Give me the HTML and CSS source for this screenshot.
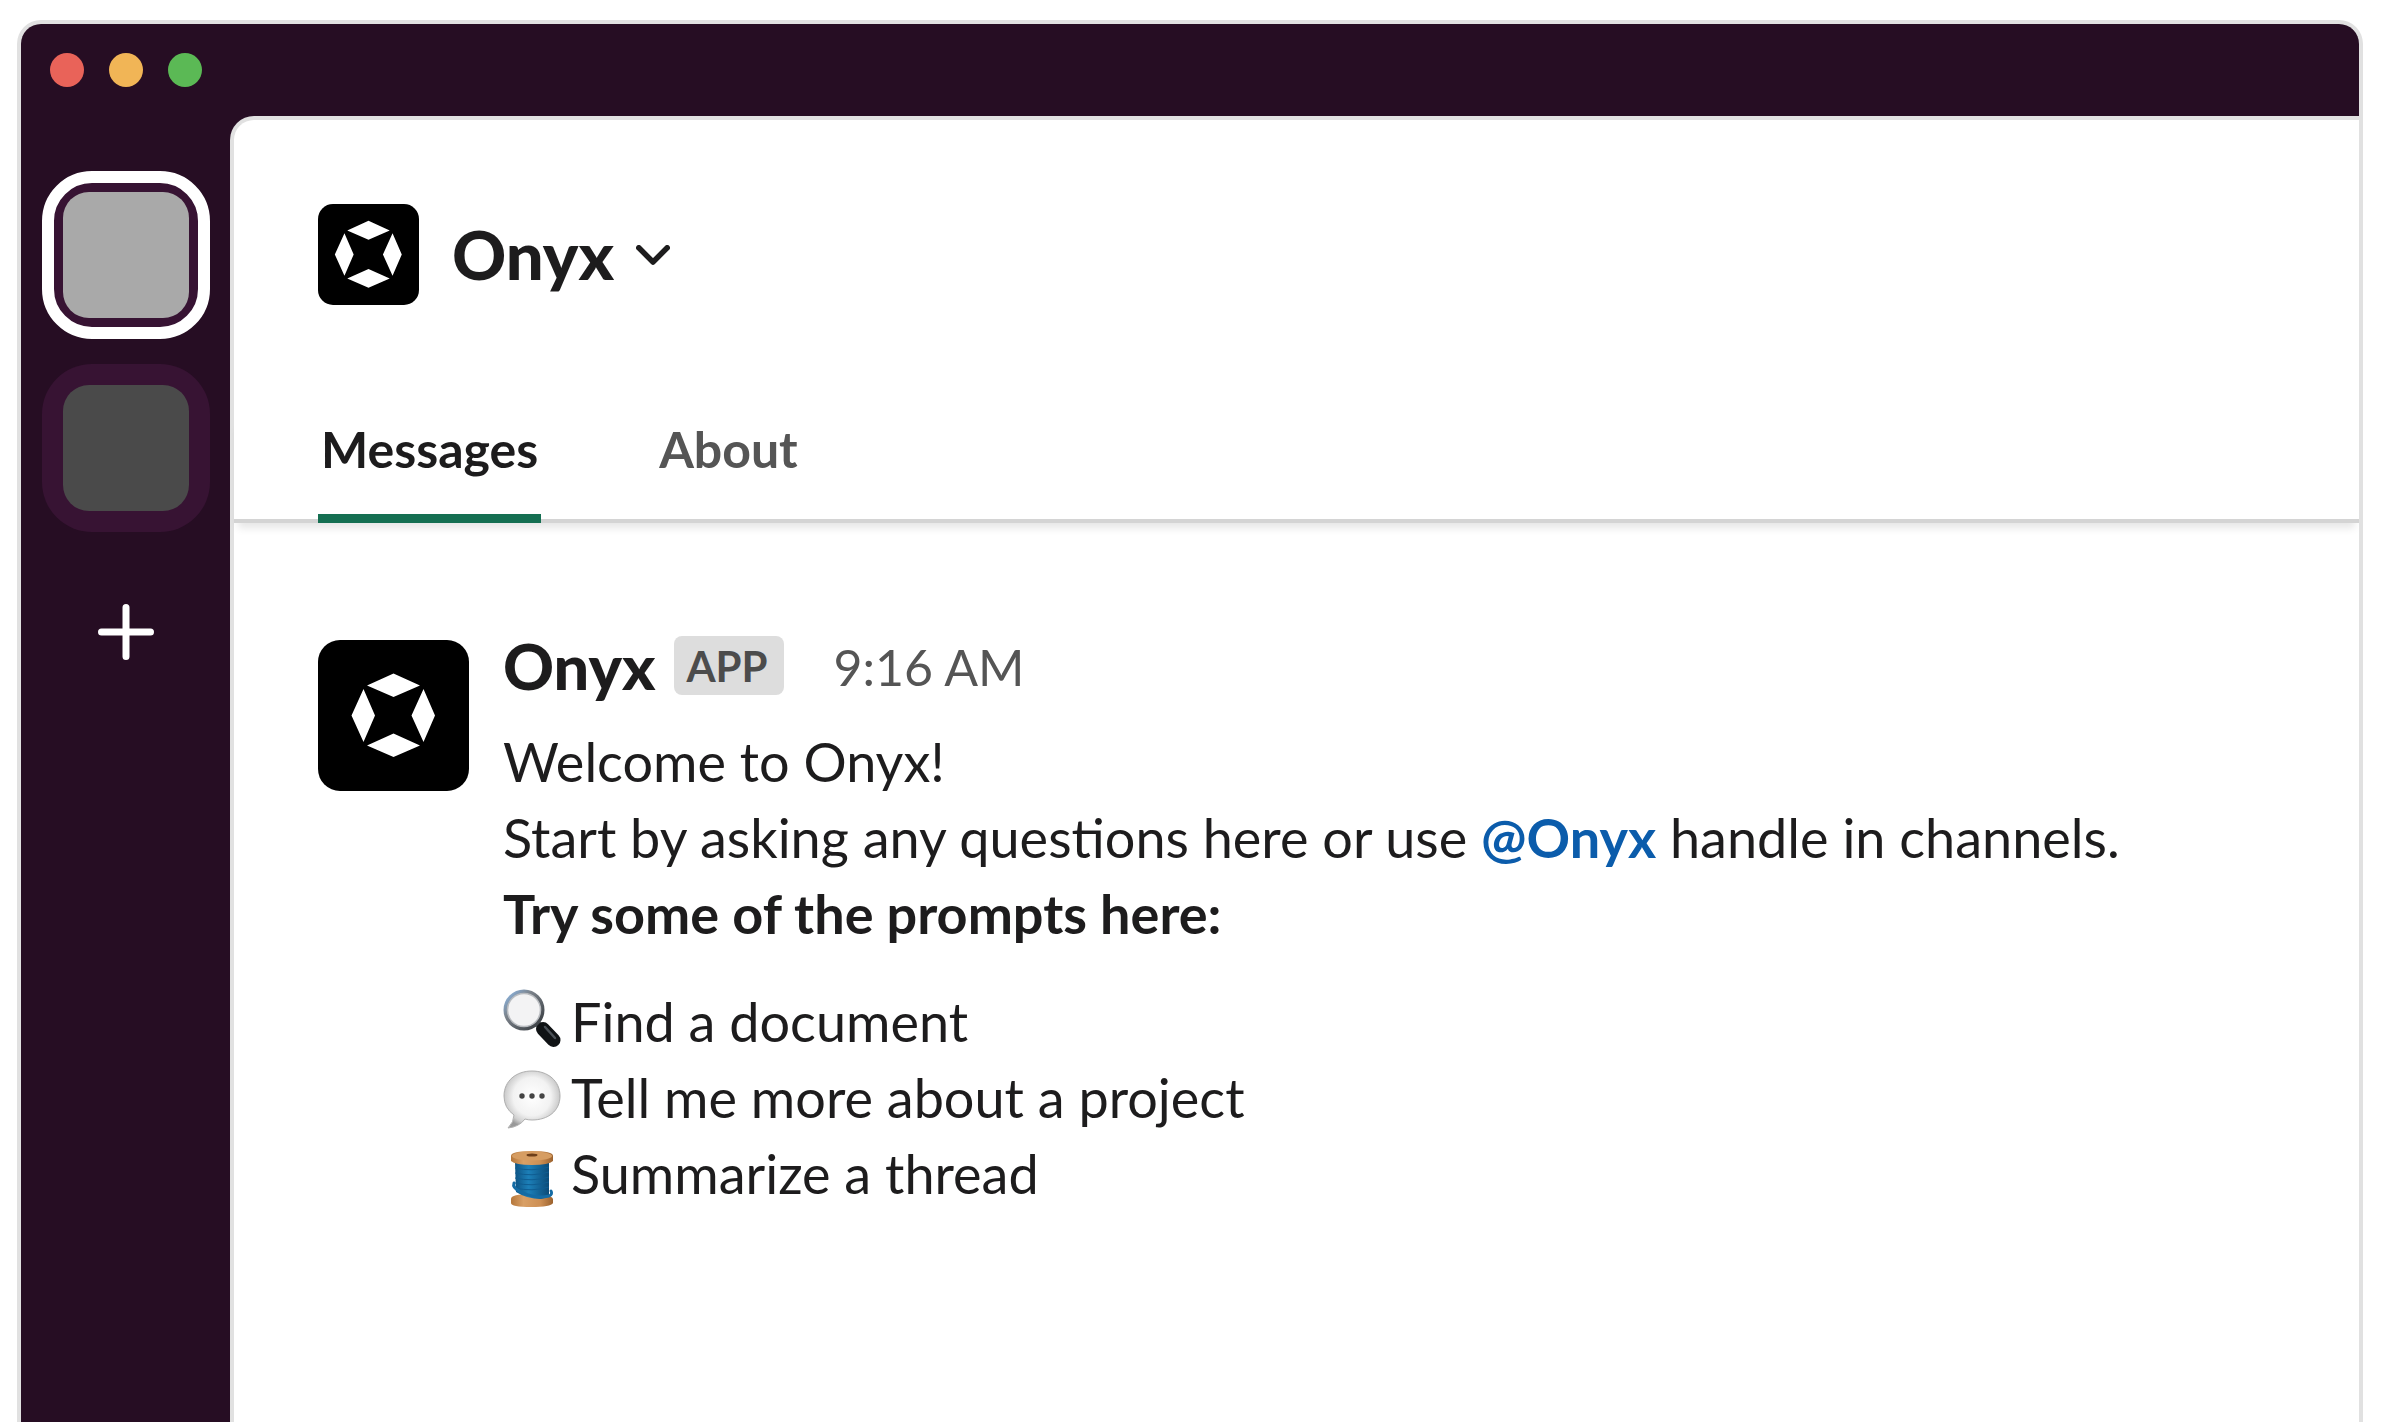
FILE: index.html
```html
<!DOCTYPE html>
<html lang="en">
<head>
<meta charset="utf-8">
<title>Onyx</title>
<link rel="stylesheet" href="styles.css">
</head>
<body>
<div class="window">
  <header class="titlebar">
    <button class="dot dot-close" aria-label="Close"></button>
    <button class="dot dot-minimize" aria-label="Minimize"></button>
    <button class="dot dot-zoom" aria-label="Zoom"></button>
  </header>
  <div class="body">
    <nav class="rail" aria-label="Workspaces">
      <button class="workspace workspace-active" aria-label="Current workspace"><span class="swatch swatch-light"></span></button>
      <button class="workspace" aria-label="Other workspace"><span class="swatch swatch-dark"></span></button>
      <button class="add" aria-label="Add a workspace">
        <svg viewBox="0 0 56 56" width="56" height="56" fill="none" stroke="#fff" stroke-width="7" stroke-linecap="round"><path d="M28 3.5v49M3.5 28h49"/></svg>
      </button>
    </nav>
    <main class="main">
      <button class="channel">
        <svg class="logo-small" viewBox="12.5 12.5 126 126"><use href="#onyx"/></svg>
        <span class="channel-name">Onyx</span>
        <svg class="chevron" viewBox="0 0 34 20" fill="none" stroke="#1d1c1d" stroke-width="5.500" stroke-linecap="round" stroke-linejoin="round"><path d="M2.800 2.800L17 17L31.200 2.800"/></svg>
      </button>
      <nav class="tabs">
        <a class="tab tab-active" href="#messages">Messages</a>
        <a class="tab" href="#about">About</a>
      </nav>
      <article class="message" id="messages">
        <svg class="avatar" viewBox="0 0 151 151">
          <g id="onyx">
            <path fill="#fff" d="M75.500 33.500L102 45.500L75.500 57L49 45.500ZM75.500 93.500L102 105.500L75.500 117L49 105.500ZM33.500 75.500L45.500 49L57 75.500L45.500 102ZM93.500 75.500L105.500 49L117 75.500L105.500 102Z"/>
          </g>
        </svg>
        <div class="content">
          <div class="meta">
            <span class="author">Onyx</span>
            <span class="badge">APP</span>
            <time class="time">9:16 AM</time>
          </div>
          <p>Welcome to Onyx!</p>
          <p>Start by asking any questions here or use <a class="mention" href="#about">@Onyx</a> handle in channels.</p>
          <p class="strong">Try some of the prompts here:</p>
          <ul class="prompts">
            <li>
              <svg class="emoji" viewBox="0 4 58 58">
                <defs>
                  <linearGradient id="rim" x1="0" y1="0" x2="1" y2="1"><stop offset="0" stop-color="#8db9e8"/><stop offset=".35" stop-color="#7b828a"/><stop offset="1" stop-color="#34383c"/></linearGradient>
                </defs>
                <path d="M34 34l5 5" stroke="#777c80" stroke-width="7"/>
                <path d="M40 40l10.500 11" stroke="#101315" stroke-width="14" stroke-linecap="round"/>
                <path d="M42 38l10 11" stroke="#4a5056" stroke-width="2.500" stroke-linecap="round"/>
                <circle cx="21" cy="21" r="18.500" fill="#f3f3f4" stroke="url(#rim)" stroke-width="4"/>
                <circle cx="21" cy="21" r="16.500" fill="none" stroke="#b9bcc0" stroke-width="1.500"/>
              </svg>
              <a href="#find">Find a document</a>
            </li>
            <li>
              <svg class="emoji" viewBox="0 -1 58 58">
                <defs>
                  <radialGradient id="bubble" cx=".5" cy=".45" r=".56"><stop offset="0" stop-color="#fff"/><stop offset=".6" stop-color="#f2f2f2"/><stop offset=".85" stop-color="#cfcfcf"/><stop offset="1" stop-color="#999"/></radialGradient>
                </defs>
                <path fill="url(#bubble)" stroke="#b0b0b0" stroke-width="1" d="M29 1C45 1 57 11 57 26S45 50 29 50Q25 50 22 49Q16 57 5 58Q11 52 11 45Q1 38 1 26C1 11 13 1 29 1Z"/>
                <g fill="#444"><circle cx="19" cy="26" r="2.700"/><circle cx="29" cy="26" r="2.700"/><circle cx="39" cy="26" r="2.700"/></g>
              </svg>
              <a href="#tell">Tell me more about a project</a>
            </li>
            <li>
              <svg class="emoji" viewBox="0 -4 58 58">
                <defs>
                  <linearGradient id="wood"><stop offset="0" stop-color="#b5773b"/><stop offset=".3" stop-color="#d9a066"/><stop offset=".7" stop-color="#cd8f54"/><stop offset="1" stop-color="#9c622e"/></linearGradient>
                  <linearGradient id="thread"><stop offset="0" stop-color="#0e5484"/><stop offset=".4" stop-color="#1c7fb8"/><stop offset="1" stop-color="#0b4b78"/></linearGradient>
                </defs>
                <path fill="url(#wood)" d="M8 50Q8 45 28 45T50 50V54Q48 58 28 58T8 54Z"/>
                <path fill="url(#thread)" d="M12 13H46V46Q47 48 38 50Q24 50 13 43Z"/>
                <path fill="none" stroke="#0f5d92" stroke-width="1" d="M12 19q17 4 34-1M12 24q17 4 34-1M12 29q17 4 34-1M12 34q17 4 34-1M12 39q17 4 34-1"/>
                <path fill="none" stroke="#146ba4" stroke-width="3" stroke-linecap="round" d="M11 34Q9 39 18 43Q32 50 46 47Q50 45 48 42"/>
                <path fill="url(#wood)" d="M8 7Q8 2 29 2T50 7V12Q46 16 29 16T8 12Z"/>
                <ellipse cx="29" cy="7" rx="20" ry="4.500" fill="#d69d62"/>
                <ellipse cx="29" cy="6" rx="5.500" ry="1.500" fill="#6d3f1a"/>
              </svg>
              <a href="#summarize">Summarize a thread</a>
            </li>
          </ul>
        </div>
      </article>
    </main>
  </div>
</div>
</body>
</html>
```

FILE: styles.css
```css
* {
  box-sizing: border-box;
}

body {
  margin: 0;
  min-height: 100vh;
  display: flex;
  padding: 20px 19px 0 17px;
  background: #fff;
  color: #1d1c1d;
  font-family: Lato, sans-serif;
  font-size: 54px;
  line-height: 76px;
}

button {
  padding: 0;
  border: 0;
  background: none;
  color: inherit;
  font: inherit;
}

a {
  color: inherit;
  text-decoration: none;
}

svg {
  display: block;
  flex: none;
}

.window {
  flex: 1;
  display: flex;
  flex-direction: column;
  border: 4px solid #e1e1e1;
  border-bottom: 0;
  border-radius: 24px 24px 0 0;
  background: #260d23;
  overflow: hidden;
}

.titlebar {
  display: flex;
  gap: 25px;
  padding: 29px;
}

.dot {
  width: 34px;
  height: 34px;
  border-radius: 50%;
}

.dot-close {
  background: #e96359;
}

.dot-minimize {
  background: #f1b556;
}

.dot-zoom {
  background: #5bb955;
}

.body {
  flex: 1;
  display: flex;
}

.rail {
  flex: none;
  display: flex;
  flex-direction: column;
  align-items: center;
  gap: 25px;
  width: 209px;
  padding-top: 55px;
}

.workspace {
  display: grid;
  place-items: center;
  width: 168px;
  height: 168px;
  border-radius: 50px;
  background: #371333;
}

.workspace-active {
  border: 12px solid #fff;
}

.swatch {
  width: 126px;
  height: 126px;
  border-radius: 26px;
}

.swatch-light {
  background: #a9a9a9;
}

.swatch-dark {
  background: #4a4a4a;
}

.add {
  padding: 47px;
}

.main {
  flex: 1;
  border: solid #e1e1e1;
  border-width: 4px 0 0 4px;
  border-radius: 24px 0 0 0;
  background: #fff;
}

.channel {
  display: flex;
  align-items: center;
  padding: 84px 84px 0;
}

.logo-small {
  width: 101px;
  height: 101px;
  border-radius: 15px;
  background: #000;
}

.channel-name {
  margin-left: 33px;
  padding-bottom: 2px;
  font-size: 67px;
  font-weight: 900;
}

.chevron {
  width: 34px;
  height: 20px;
  margin-left: 22px;
}

.tabs {
  display: flex;
  gap: 115px;
  margin-top: 111px;
  padding: 0 84px;
  border-bottom: 4px solid #d4d4d4;
  box-shadow: 0 9px 8px -4px rgba(0, 0, 0, 0.1);
}

.tab {
  margin-bottom: -4px;
  padding: 0 3px 31px;
  border-bottom: 9px solid transparent;
  color: #555;
  font-size: 50px;
  font-weight: 700;
  line-height: 67px;
}

.tab-active {
  border-color: #156f52;
  color: #1d1c1d;
}

.message {
  display: flex;
  gap: 34px;
  padding: 113px 84px 0;
}

.avatar {
  width: 151px;
  height: 151px;
  margin-top: 4px;
  border-radius: 22px;
  background: #000;
}

.meta {
  display: flex;
  align-items: center;
  height: 59px;
  margin-bottom: 29px;
}

.author {
  font-size: 63px;
  font-weight: 900;
}

.badge {
  height: 59px;
  margin: 0 50px 0 19px;
  padding: 0 16px 0 12px;
  border-radius: 8px;
  background: #ddd;
  color: #4c4c4c;
  font-size: 42px;
  font-weight: 700;
  line-height: 61px;
}

.time {
  padding-top: 2px;
  color: #555;
  font-size: 50px;
}

p {
  margin: 0;
}

.mention {
  color: #0b5cab;
  font-weight: 700;
}

.strong {
  font-weight: 700;
}

.prompts {
  margin: 32px 0 0;
  padding: 0;
  list-style: none;
}

.prompts li {
  display: flex;
  align-items: center;
  gap: 10px;
}

.emoji {
  width: 58px;
  height: 58px;
  overflow: visible;
}
```
